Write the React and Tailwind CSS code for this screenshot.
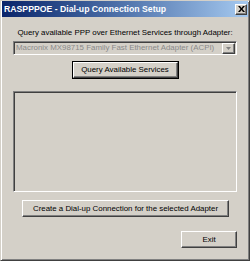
const raised =
  "border border-t-white border-l-white border-r-[#404040] border-b-[#404040] shadow-[inset_-1px_-1px_#808080] bg-[#d4d0c8]";

const Button = ({ className, children }) => (
  <div className={`${raised} flex items-center justify-center text-black ${className}`}>
    {children}
  </div>
);

const App = () => {
  return (
    <div
      className="w-[250px] h-[261px] bg-[#d4d0c8] border border-t-[#d4d0c8] border-l-[#d4d0c8] border-r-[#404040] border-b-[#404040] shadow-[inset_1px_1px_white,inset_-1px_-1px_#808080] flex flex-col text-[7.9px] leading-[10px]"
      style={{ fontFamily: '"Liberation Sans", Arial, sans-serif' }}
    >
      {/* title bar */}
      <div className="h-[16px] mx-[1px] flex items-center justify-between bg-gradient-to-r from-[#0a246a] to-[#a6caf0] pl-[2px] pr-[1px]">
        <span className="text-white font-bold text-[8.7px]">RASPPPOE - Dial-up Connection Setup</span>
        <div className={`${raised} w-[12px] h-[11px] flex items-center justify-center`}>
          <svg width="7" height="6" viewBox="0 0 7 6">
            <path d="M0 0h2l1.5 2L5 0h2L4.5 3 7 6H5L3.5 4 2 6H0l2.5-3z" fill="#000" />
          </svg>
        </div>
      </div>

      <div className="mt-[11px] text-center text-black">
        Query available PPP over Ethernet Services through Adapter:
      </div>

      {/* combo box (disabled) */}
      <div className="mt-[3px] ml-[12px] w-[224px] h-[14px] border border-t-[#808080] border-l-[#808080] border-r-white border-b-white shadow-[inset_1px_1px_#404040] flex items-center">
        <span className="flex-1 pl-[2px] text-[#8a8a8a] whitespace-nowrap overflow-hidden">
          Macronix MX98715 Family Fast Ethernet Adapter (ACPI)
        </span>
        <div className={`${raised} w-[13px] h-[11px] mr-[1px] flex items-center justify-center`}>
          <svg width="5" height="3" viewBox="0 0 5 3">
            <path d="M0 0h5L2.5 3z" fill="#808080" />
          </svg>
        </div>
      </div>

      <div className="mt-[6px] mx-auto w-[107px] h-[18px] border border-black">
        <Button className="w-full h-full">Query Available Services</Button>
      </div>

      {/* list area */}
      <div className="mt-[12px] ml-[12px] w-[224px] h-[101px] border border-t-[#808080] border-l-[#808080] border-r-white border-b-white shadow-[inset_1px_1px_#404040]" />

      <Button className="mt-[8px] ml-[21px] w-[207px] h-[17px]">
        Create a Dial-up Connection for the selected Adapter
      </Button>

      <Button className="mt-[14px] ml-[180px] w-[56px] h-[17px]">Exit</Button>
    </div>
  );
};

export default App;
